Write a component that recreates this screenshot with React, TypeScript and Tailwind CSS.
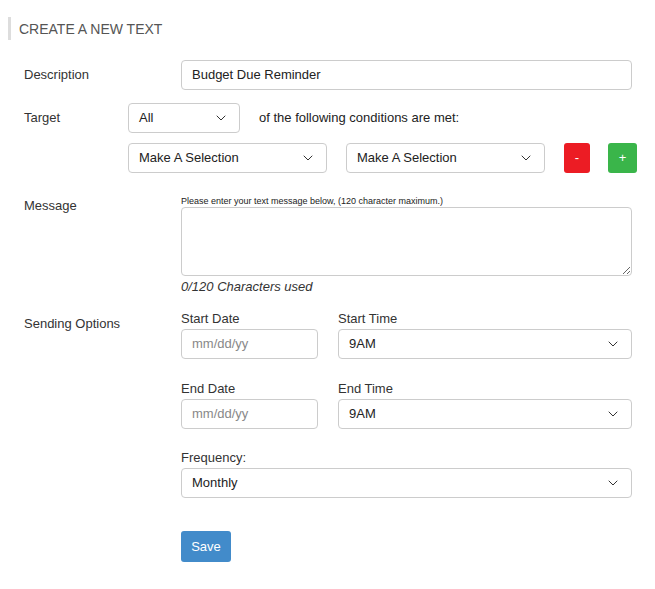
import React from 'react';
import { ChevronDown } from 'lucide-react';

const font = { fontFamily: '"Liberation Sans", Arial, sans-serif' };

const Select: React.FC<{ value: string; className: string }> = ({ value, className }) => (
  <div className={`flex items-center justify-between border border-[#ccc] rounded bg-white px-[10px] text-[13px] text-[#222] ${className}`}>
    <span>{value}</span>
    <ChevronDown className="w-4 h-4 text-[#333]" strokeWidth={1.5} />
  </div>
);

const DateInput: React.FC = () => (
  <div className="flex items-center w-[137px] h-[30px] border border-[#ccc] rounded px-[10px] text-[13px] text-[#888]">
    mm/dd/yy
  </div>
);

const App: React.FC = () => {
  return (
    <div className="w-[655px] h-[589px] bg-white text-[#333] text-[13px] leading-[16px]" style={font}>
      {/* Heading */}
      <div className="pt-[17px] pl-2">
        <div className="border-l-[3px] border-[#ddd] h-[23px] flex items-center pl-2 text-[14px] text-[#555]">
          CREATE A NEW TEXT
        </div>
      </div>

      <div className="pl-6 pr-[23px] pt-5">
        {/* Description */}
        <div className="flex items-center h-[30px]">
          <div className="w-[157px]">Description</div>
          <div className="flex-1 h-[30px] border border-[#ccc] rounded flex items-center px-[10px] text-[#222]">
            Budget Due Reminder
          </div>
        </div>

        {/* Target */}
        <div className="flex items-center h-[30px] mt-[13px]">
          <div className="w-[104px]">Target</div>
          <Select value="All" className="w-[112px] h-[30px]" />
          <div className="ml-[19px] text-[#222]">of the following conditions are met:</div>
        </div>
        <div className="flex items-center h-[30px] mt-[10px] pl-[104px]">
          <Select value="Make A Selection" className="w-[199px] h-[30px] shrink-0" />
          <Select value="Make A Selection" className="w-[199px] h-[30px] ml-[19px] shrink-0" />
          <div className="ml-[19px] w-[26px] h-[30px] shrink-0 rounded-[3px] bg-[#ec1c24] text-white flex items-center justify-center text-[13px]">-</div>
          <div className="ml-[18px] w-[29px] h-[30px] shrink-0 rounded-[3px] bg-[#3ab54a] text-white flex items-center justify-center text-[13px]">+</div>
        </div>

        {/* Message */}
        <div className="flex mt-[22px]">
          <div className="w-[157px] pt-[3px]">Message</div>
          <div className="flex-1">
            <div className="text-[9px] leading-[12px] text-[#222]">
              Please enter your text message below, (120 character maximum.)
            </div>
            <textarea className="block w-full h-[69px] border border-[#ccc] rounded resize-y outline-none" />
            <div className="italic mt-[3px] text-[#333]">0/120 Characters used</div>
          </div>
        </div>

        {/* Sending Options */}
        <div className="flex mt-[16px]">
          <div className="w-[157px] pt-[5px]">Sending Options</div>
          <div className="flex-1">
            <div className="flex gap-5">
              <div>
                <div className="mb-[2px]">Start Date</div>
                <DateInput />
              </div>
              <div className="flex-1">
                <div className="mb-[2px]">Start Time</div>
                <Select value="9AM" className="w-full h-[30px]" />
              </div>
            </div>
            <div className="flex gap-5 mt-[22px]">
              <div>
                <div className="mb-[2px]">End Date</div>
                <DateInput />
              </div>
              <div className="flex-1">
                <div className="mb-[2px]">End Time</div>
                <Select value="9AM" className="w-full h-[30px]" />
              </div>
            </div>
            <div className="mt-[21px]">
              <div className="mb-[2px]">Frequency:</div>
              <Select value="Monthly" className="w-full h-[30px]" />
            </div>
            <button className="mt-[33px] w-[50px] h-[31px] rounded-[3px] bg-[#428bca] text-white text-[13px]">
              Save
            </button>
          </div>
        </div>
      </div>
    </div>
  );
};

export default App;
